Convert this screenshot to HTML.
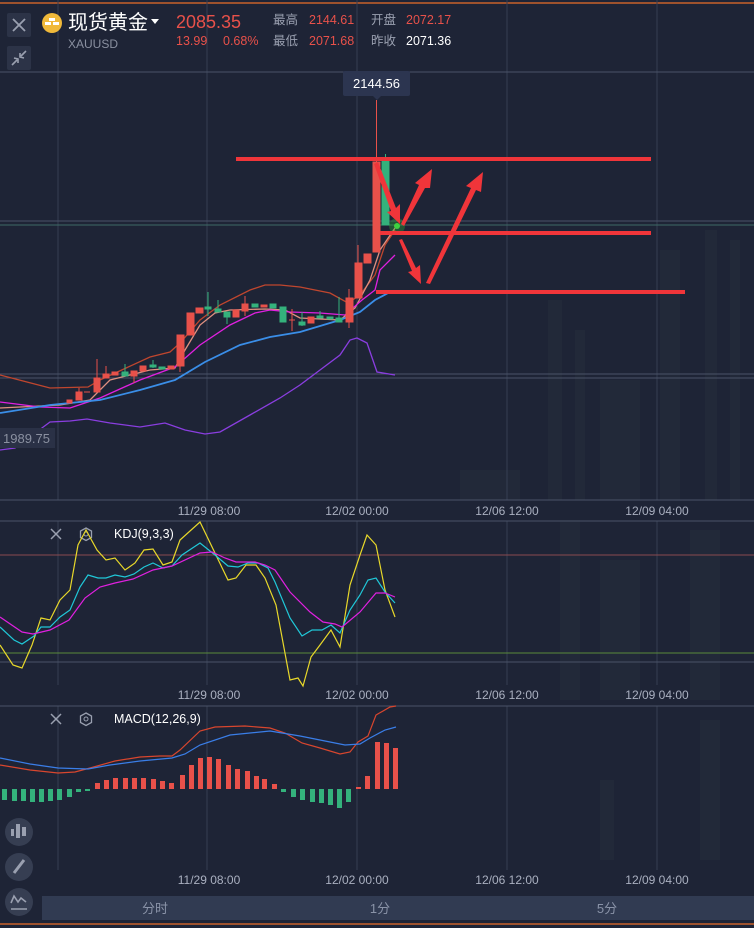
<!DOCTYPE html>
<html><head><meta charset="utf-8"><style>
html,body{margin:0;padding:0;background:#1e2436;width:754px;height:928px;overflow:hidden}
svg{display:block}
text{font-family:"Liberation Sans","Noto Sans CJK SC",sans-serif}
</style></head><body>
<svg width="754" height="928" viewBox="0 0 754 928" xmlns="http://www.w3.org/2000/svg">
<rect width="754" height="928" fill="#1e2436"/>
<!-- faint building blocks -->
<g fill="#222939">
<rect x="548" y="300" width="14" height="200"/><rect x="575" y="330" width="10" height="170"/><rect x="600" y="380" width="40" height="120"/><rect x="660" y="250" width="20" height="250"/><rect x="705" y="230" width="12" height="270"/><rect x="730" y="240" width="10" height="260"/>
<rect x="460" y="470" width="60" height="30"/><rect x="560" y="520" width="20" height="180"/><rect x="600" y="560" width="40" height="140"/><rect x="690" y="530" width="30" height="170"/>
<rect x="700" y="720" width="20" height="140"/><rect x="600" y="780" width="14" height="80"/>
</g>
<line x1="0" y1="3" x2="754" y2="3" stroke="#c8622a" stroke-width="1.5"/>
<line x1="0" y1="924" x2="754" y2="924" stroke="#c8622a" stroke-width="1.5"/>
<!-- grid -->
<g stroke="#363e52" stroke-width="1">
<line x1="58" y1="0" x2="58" y2="500"/><line x1="207" y1="0" x2="207" y2="500"/><line x1="357" y1="0" x2="357" y2="500"/><line x1="507" y1="0" x2="507" y2="500"/><line x1="657" y1="0" x2="657" y2="500"/>
<line x1="58" y1="521" x2="58" y2="685"/><line x1="207" y1="521" x2="207" y2="685"/><line x1="357" y1="521" x2="357" y2="685"/><line x1="507" y1="521" x2="507" y2="685"/><line x1="657" y1="521" x2="657" y2="685"/>
<line x1="58" y1="706" x2="58" y2="870"/><line x1="207" y1="706" x2="207" y2="870"/><line x1="357" y1="706" x2="357" y2="870"/><line x1="507" y1="706" x2="507" y2="870"/><line x1="657" y1="706" x2="657" y2="870"/>
</g>
<g stroke="#4a5268" stroke-width="1">
<line x1="0" y1="72" x2="754" y2="72"/><line x1="0" y1="221" x2="754" y2="221"/><line x1="0" y1="500" x2="754" y2="500"/>
<line x1="0" y1="374" x2="754" y2="374"/><line x1="0" y1="378" x2="754" y2="378"/>
<line x1="0" y1="521" x2="754" y2="521"/><line x1="0" y1="662" x2="754" y2="662"/><line x1="0" y1="706" x2="754" y2="706"/>
</g>
<line x1="0" y1="225" x2="754" y2="225" stroke="#3e6a66"/>
<line x1="0" y1="555" x2="754" y2="555" stroke="#8a4a50"/>
<line x1="0" y1="653" x2="754" y2="653" stroke="#5a8a3a"/>

<!-- header -->
<rect x="7" y="13" width="24" height="24" rx="2" fill="#2c3347"/>
<path d="M13 19 L25 31 M25 19 L13 31" stroke="#9aa0b0" stroke-width="1.8"/>
<rect x="7" y="46" width="24" height="24" rx="2" fill="#2c3347"/>
<path d="M12 65 L17 60 M14 58 L18 59 L18 63 M26 51 L21 56 M24 58 L20 57 L20 53" stroke="#9aa0b0" stroke-width="1.6" fill="none"/>
<circle cx="52" cy="23" r="10" fill="#f0b93a"/>
<path d="M49 18h6v3h-6z M45 22h6v3h-6z M53 22h6v3h-6z" fill="#fff"/>
<text x="68" y="29" font-size="20" fill="#fff">现货黄金</text>
<path d="M151 19 L159 19 L155 24 Z" fill="#fff"/>
<text x="176" y="28" font-size="18" fill="#e8514a">2085.35</text>
<text x="68" y="48" font-size="12" fill="#8a90a0">XAUUSD</text>
<text x="176" y="45" font-size="12.5" fill="#e8514a">13.99</text>
<text x="223" y="45" font-size="12.5" fill="#e8514a">0.68%</text>
<g font-size="12.5">
<text x="273" y="24" fill="#9aa0b0">最高</text><text x="309" y="24" fill="#e8514a">2144.61</text>
<text x="371" y="24" fill="#9aa0b0">开盘</text><text x="406" y="24" fill="#e8514a">2072.17</text>
<text x="273" y="45" fill="#9aa0b0">最低</text><text x="309" y="45" fill="#e8514a">2071.68</text>
<text x="371" y="45" fill="#9aa0b0">昨收</text><text x="406" y="45" fill="#fff">2071.36</text>
</g>
<!-- tooltip -->
<rect x="343" y="71" width="67" height="25" rx="2" fill="#2c3550"/>
<path d="M373 96 L377 100 L381 96Z" fill="#2c3550"/>
<text x="376.5" y="88" font-size="13" fill="#fff" text-anchor="middle">2144.56</text>

<!-- MA lines main -->
<g fill="none" stroke-width="1.3">
<polyline stroke="#c0462e" points="0,375 50,388 88,387 100,380 150,357 170,352 180,343 200,320 220,305 250,290 265,285 280,285 300,287 330,293 348,303 360,295 375,275 385,245 395,230"/>
<polyline stroke="#e09080" points="0,408 60,405 90,400 110,380 150,370 175,368 185,350 200,325 215,313 230,310 265,309 285,310 300,318 340,320 355,308 370,280 380,250 395,228"/>
<polyline stroke="#e020e0" points="0,402 40,407 70,408 100,398 140,380 175,367 200,345 230,325 255,313 270,310 290,312 320,313 345,315 362,300 375,290 380,270 395,255"/>
<polyline stroke="#3a8ee8" stroke-width="1.8" points="0,413 50,405 100,400 140,390 175,380 205,362 240,345 270,337 300,332 340,320 360,312 375,300 390,292"/>
<polyline stroke="#8a3ee0" points="0,450 15,448 50,422 70,421 87,419 110,423 140,427 165,423 185,430 205,434 220,432 250,415 280,398 300,385 320,370 340,355 350,340 357,338 367,343 377,372 395,375"/>
</g>
<!-- candles -->
<g fill="#e8514a" stroke="#e8514a" stroke-width="1">
<rect x="67" y="400" width="5" height="3"/>
<rect x="76" y="392" width="6" height="8"/><line x1="79" y1="388" x2="79" y2="392"/>
<line x1="84" y1="392" x2="90" y2="392"/>
<rect x="94" y="378" width="6" height="14"/><line x1="97" y1="359" x2="97" y2="378"/>
<rect x="103" y="374" width="6" height="4"/><line x1="106" y1="366" x2="106" y2="374"/>
<rect x="112" y="372" width="6" height="3"/>
<rect x="131" y="371" width="6" height="5"/><line x1="134" y1="376" x2="134" y2="383"/>
<rect x="140" y="366" width="6" height="5"/>
<rect x="168" y="366" width="6" height="3"/>
<rect x="177" y="335" width="7" height="31"/><line x1="180" y1="366" x2="180" y2="372"/>
<rect x="187" y="313" width="7" height="22"/>
<rect x="196" y="308" width="7" height="5"/>
<rect x="233" y="310" width="6" height="7"/>
<rect x="242" y="304" width="6" height="7"/><line x1="245" y1="296" x2="245" y2="316"/>
<rect x="261" y="305" width="6" height="2"/>
<line x1="289" y1="320" x2="295" y2="320"/><line x1="292" y1="309" x2="292" y2="331"/>
<rect x="308" y="317" width="6" height="6"/>
<rect x="346" y="298" width="7" height="24"/><line x1="349" y1="289" x2="349" y2="328"/>
<rect x="355" y="263" width="7" height="35"/><line x1="358" y1="245" x2="358" y2="263"/>
<rect x="364" y="254" width="7" height="9"/>
<rect x="373" y="162" width="7" height="90"/><line x1="376.5" y1="100" x2="376.5" y2="162"/>
</g>
<g fill="#34b27c" stroke="#34b27c" stroke-width="1">
<rect x="122" y="372" width="6" height="4"/><line x1="125" y1="364" x2="125" y2="372"/>
<rect x="150" y="365" width="6" height="2"/><line x1="153" y1="360" x2="153" y2="368"/>
<rect x="159" y="367" width="6" height="2"/>
<rect x="205" y="307" width="6" height="2"/><line x1="208" y1="292" x2="208" y2="316"/>
<rect x="215" y="309" width="6" height="3"/><line x1="218" y1="300" x2="218" y2="312"/>
<rect x="224" y="312" width="6" height="5"/><line x1="227" y1="317" x2="227" y2="324"/>
<rect x="252" y="304" width="6" height="3"/>
<rect x="270" y="304" width="6" height="4"/>
<rect x="280" y="307" width="6" height="15"/>
<rect x="299" y="322" width="6" height="3"/><line x1="302" y1="312" x2="302" y2="326"/>
<rect x="317" y="316" width="6" height="2"/><line x1="320" y1="311" x2="320" y2="318"/>
<rect x="327" y="317" width="6" height="2"/>
<rect x="336" y="318" width="6" height="4"/><line x1="339" y1="297" x2="339" y2="322"/>
<rect x="382" y="161" width="7" height="64"/><line x1="385.5" y1="154" x2="385.5" y2="161"/>
</g>
<!-- glow -->
<circle cx="397" cy="226" r="8" fill="#2fb030" opacity="0.35"/>
<circle cx="397" cy="226" r="3" fill="#40d040"/>
<!-- annotations -->
<g fill="#f0353a" stroke="none">
<rect x="236" y="157" width="415" height="4"/>
<rect x="380" y="231" width="271" height="4"/>
<rect x="376" y="290" width="309" height="4"/>
<path d="M374 164 L378 162 L396 208 L400 204 L400 224 L387 212 L391 211 Z"/>
<path d="M401 224 L419 185 L415 183 L432 169 L430 188 L425 188 L404 226 Z"/>
<path d="M399 240 L402 239 L416 268 L420 265 L421 284 L408 272 L412 271 Z"/>
<path d="M426 283 L471 188 L466 186 L483 172 L481 192 L476 190 L430 284 Z"/>
</g>
<!-- price label -->
<rect x="0" y="428" width="55" height="20" fill="#2a3146"/>
<text x="3" y="443" font-size="13" fill="#8a90a0">1989.75</text>
<!-- axis labels -->
<g font-size="12" fill="#aab0c0" text-anchor="middle">
<text x="209" y="515">11/29 08:00</text><text x="357" y="515">12/02 00:00</text><text x="507" y="515">12/06 12:00</text><text x="657" y="515">12/09 04:00</text>
<text x="209" y="699">11/29 08:00</text><text x="357" y="699">12/02 00:00</text><text x="507" y="699">12/06 12:00</text><text x="657" y="699">12/09 04:00</text>
<text x="209" y="884">11/29 08:00</text><text x="357" y="884">12/02 00:00</text><text x="507" y="884">12/06 12:00</text><text x="657" y="884">12/09 04:00</text>
</g>
<!-- KDJ -->
<path d="M51 529 L61 539 M61 529 L51 539" stroke="#9aa0b0" stroke-width="1.5"/>
<path d="M86 528 L91.5 531 L91.5 537.5 L86 540.5 L80.5 537.5 L80.5 531 Z" stroke="#9aa0b0" stroke-width="1.3" fill="none"/><circle cx="86" cy="534" r="2" stroke="#9aa0b0" fill="none"/>
<text x="114" y="538" font-size="12.5" fill="#fff">KDJ(9,3,3)</text>
<g fill="none" stroke-width="1.2">
<polyline stroke="#e8d82a" points="0,645 13,665 22,668 32,645 41,618 50,620 60,600 70,590 78,545 86,530 97,550 106,560 115,558 125,570 135,563 144,550 153,549 163,565 172,562 180,540 200,522 228,580 236,578 246,565 256,565 265,578 276,605 290,680 298,678 303,686 311,657 320,645 331,630 340,647 350,585 360,555 367,535 376,545 385,590 395,617"/>
<polyline stroke="#20c8d8" points="0,627 14,640 22,644 34,636 41,627 50,627 60,617 70,610 80,587 88,575 98,578 106,578 115,575 125,577 134,574 144,567 153,563 163,568 172,566 182,555 200,543 215,555 228,566 238,567 248,563 258,563 268,568 275,582 290,618 302,636 312,630 322,630 331,625 340,633 350,610 360,595 368,580 376,578 385,592 395,603"/>
<polyline stroke="#e020e0" points="0,617 22,632 33,634 50,630 69,620 85,598 100,587 115,583 133,579 153,570 172,566 200,553 212,552 225,558 236,562 255,562 265,565 275,570 290,592 310,612 323,622 335,624 342,627 360,612 376,593 385,593 395,597"/>
</g>
<!-- MACD -->
<path d="M51 714 L61 724 M61 714 L51 724" stroke="#9aa0b0" stroke-width="1.5"/>
<path d="M86 713 L91.5 716 L91.5 722.5 L86 725.5 L80.5 722.5 L80.5 716 Z" stroke="#9aa0b0" stroke-width="1.3" fill="none"/><circle cx="86" cy="719" r="2" stroke="#9aa0b0" fill="none"/>
<text x="114" y="723" font-size="12.5" fill="#fff">MACD(12,26,9)</text>
<g fill="#34b27c">
<rect x="2" y="789" width="5" height="11"/><rect x="12" y="789" width="5" height="12"/><rect x="21" y="789" width="5" height="12"/><rect x="30" y="789" width="5" height="13"/><rect x="39" y="789" width="5" height="13"/><rect x="48" y="789" width="5" height="12"/><rect x="57" y="789" width="5" height="11"/><rect x="67" y="789" width="5" height="8"/><rect x="76" y="789" width="5" height="3"/><rect x="85" y="789" width="5" height="2"/>
<rect x="281" y="789" width="5" height="3"/><rect x="291" y="789" width="5" height="8"/><rect x="300" y="789" width="5" height="11"/><rect x="310" y="789" width="5" height="13"/><rect x="319" y="789" width="5" height="14"/><rect x="328" y="789" width="5" height="16"/><rect x="337" y="789" width="5" height="19"/><rect x="346" y="789" width="5" height="13"/>
</g>
<g fill="#e8514a">
<rect x="95" y="783" width="5" height="6"/><rect x="104" y="780" width="5" height="9"/><rect x="113" y="778" width="5" height="11"/><rect x="123" y="778" width="5" height="11"/><rect x="132" y="778" width="5" height="11"/><rect x="141" y="778" width="5" height="11"/><rect x="151" y="779" width="5" height="10"/><rect x="160" y="781" width="5" height="8"/><rect x="169" y="783" width="5" height="6"/><rect x="180" y="775" width="5" height="14"/><rect x="189" y="765" width="5" height="24"/><rect x="198" y="758" width="5" height="31"/><rect x="207" y="757" width="5" height="32"/><rect x="216" y="759" width="5" height="30"/><rect x="226" y="765" width="5" height="24"/><rect x="235" y="769" width="5" height="20"/><rect x="245" y="771" width="5" height="18"/><rect x="254" y="776" width="5" height="13"/><rect x="262" y="779" width="5" height="10"/><rect x="272" y="784" width="5" height="5"/>
<rect x="356" y="787" width="5" height="2"/><rect x="365" y="776" width="5" height="13"/><rect x="375" y="742" width="5" height="47"/><rect x="384" y="743" width="5" height="46"/><rect x="393" y="748" width="5" height="41"/>
</g>
<g fill="none" stroke-width="1.2">
<polyline stroke="#d8462e" points="0,765 30,770 58,773 75,772 90,768 115,761 140,757 160,756 172,756 180,750 200,731 215,727 245,726 270,728 285,733 302,743 320,748 340,754 350,752 358,742 368,736 376,715 390,707 396,706"/>
<polyline stroke="#3a7ee8" points="0,758 30,764 58,768 88,769 110,765 140,761 172,758 185,754 200,745 230,735 270,731 300,736 330,742 345,745 360,744 370,738 385,730 396,727"/>
</g>
<!-- left tool icons -->
<circle cx="19" cy="832" r="14" fill="#363e52"/>
<g fill="#9aa0b0"><rect x="11" y="829" width="3" height="7"/><rect x="16" y="824" width="4" height="14"/><rect x="22" y="827" width="4" height="9"/></g>
<circle cx="19" cy="867" r="14" fill="#363e52"/>
<path d="M14 873 L24 860" stroke="#9aa0b0" stroke-width="3"/>
<circle cx="19" cy="902" r="14" fill="#363e52"/>
<path d="M11 903 L14 896 L18 902 L21 898 L26 902 M11 909 L27 909" stroke="#9aa0b0" stroke-width="1.6" fill="none"/>
<!-- tab bar -->
<rect x="42" y="896" width="712" height="24" fill="#313b52"/>
<g font-size="13" fill="#8a93a8" text-anchor="middle">
<text x="155" y="913">分时</text><text x="380" y="913">1分</text><text x="607" y="913">5分</text>
</g>
</svg>
</body></html>
